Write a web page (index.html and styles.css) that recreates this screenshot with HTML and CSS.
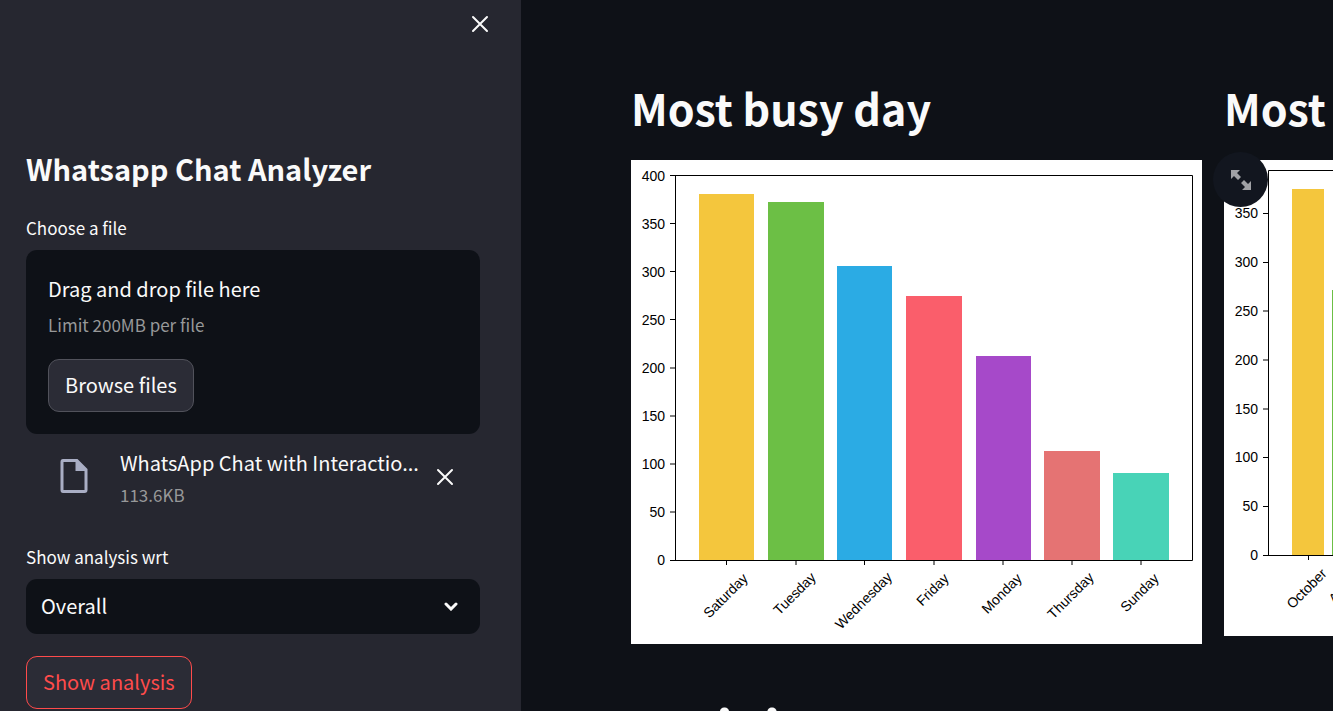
FILE: index.html
```html
<!DOCTYPE html>
<html lang="en">
<head>
<meta charset="utf-8">
<meta name="viewport" content="width=device-width, initial-scale=1">
<title>Whatsapp Chat Analyzer</title>
<link rel="stylesheet" href="styles.css">
</head>
<body>
<div class="app">
  <aside class="sidebar">
    <div class="sidebar-top">
      <button class="icon-button" type="button" aria-label="Close sidebar">
        <svg class="icon-close" viewBox="0 0 18 18" aria-hidden="true"><path d="M2 2 16 16M16 2 2 16"/></svg>
      </button>
    </div>
    <h1 class="sidebar-title">Whatsapp Chat Analyzer</h1>

    <section class="field">
      <label class="field-label" for="browse">Choose a file</label>
      <div class="dropzone">
        <span class="text">Drag and drop file here</span>
        <span class="hint">Limit 200MB per file</span>
        <button class="button" id="browse" type="button">Browse files</button>
      </div>
      <div class="file">
        <svg class="icon-file" viewBox="0 0 28 34" aria-hidden="true">
          <path d="M3 0H17.500L27.500 10V31Q27.500 34 24.500 34H3Q.5 34 .5 31V3Q.5 0 3 0ZM3.500 3V31H24.500V12H15.500V3Z" fill-rule="evenodd"/>
        </svg>
        <div class="file-info">
          <div class="file-name">WhatsApp Chat with Interactio...</div>
          <div class="file-size">113.6KB</div>
        </div>
        <button class="icon-button" type="button" aria-label="Remove file">
          <svg class="icon-close" viewBox="0 0 18 18" aria-hidden="true"><path d="M2 2 16 16M16 2 2 16"/></svg>
        </button>
      </div>
    </section>

    <section class="field">
      <label class="field-label" for="user">Show analysis wrt</label>
      <div class="select-wrap">
        <select class="select" id="user"><option>Overall</option></select>
        <svg class="icon-chevron" viewBox="0 0 14 9" aria-hidden="true"><path d="M2 2 7 7 12 2"/></svg>
      </div>
    </section>
    <button class="button button-active" type="button">Show analysis</button>
  </aside>

  <main class="main">
    <div class="columns">
      <section class="column">
        <h2 class="heading">Most busy day</h2>
        <div class="figure">
          <svg class="chart" viewBox="0 0 571 484" role="img" aria-label="Messages by day">
            <g>
              <rect x="68" y="34" width="55" height="366" fill="#f4c63d"/>
              <rect x="137" y="42" width="56" height="358" fill="#6cbf45"/>
              <rect x="206" y="106" width="55" height="294" fill="#2babe4"/>
              <rect x="275" y="136" width="56" height="264" fill="#fa5e6b"/>
              <rect x="345" y="196" width="55" height="204" fill="#a649c9"/>
              <rect x="413" y="291" width="56" height="109" fill="#e57373"/>
              <rect x="482" y="313" width="56" height="87" fill="#48d3b7"/>
            </g>
            <path class="axis" d="M44.500 15.500H561.500V400.500H44.500ZM39 15.500h6M39 63.500h6M39 111.500h6M39 159.500h6M39 208h6M39 256h6M39 304h6M39 352h6M39 400.500h6M95.500 400v5M165 400v5M233.500 400v5M303 400v5M372 400v5M441 400v5M510 400v5"/>
            <g class="y-labels">
              <text x="34" y="21">400</text><text x="34" y="69">350</text><text x="34" y="117">300</text>
              <text x="34" y="165">250</text><text x="34" y="213">200</text><text x="34" y="261">150</text>
              <text x="34" y="309">100</text><text x="34" y="357">50</text><text x="34" y="405">0</text>
            </g>
            <g class="x-labels">
              <text transform="translate(98 439) rotate(-45)">Saturday</text>
              <text transform="translate(167 437) rotate(-45)">Tuesday</text>
              <text transform="translate(236 444) rotate(-45)">Wednesday</text>
              <text transform="translate(305 433) rotate(-45)">Friday</text>
              <text transform="translate(374 437) rotate(-45)">Monday</text>
              <text transform="translate(443 439) rotate(-45)">Thursday</text>
              <text transform="translate(512 436) rotate(-45)">Sunday</text>
            </g>
          </svg>
        </div>
      </section>

      <section class="column">
        <h2 class="heading">Most busy month</h2>
        <div class="figure">
          <svg class="chart" viewBox="0 0 571 476" role="img" aria-label="Messages by month">
            <rect x="68" y="29" width="32" height="366" fill="#f4c63d"/>
            <rect x="108" y="130" width="32" height="265" fill="#6cbf45"/>
            <path class="axis" d="M44.500 10.500H561.500V395.500H44.500ZM39 53.500h6M39 102.500h6M39 151h6M39 200h6M39 249h6M39 297.500h6M39 346.500h6M39 395.500h6M84.500 395v5M124.500 395v5"/>
            <g class="y-labels">
              <text x="34" y="58">350</text><text x="34" y="107">300</text><text x="34" y="156">250</text>
              <text x="34" y="205">200</text><text x="34" y="254">150</text><text x="34" y="302">100</text>
              <text x="34" y="351">50</text><text x="34" y="400">0</text>
            </g>
            <g class="x-labels">
              <text transform="translate(86 432) rotate(-45)">October</text>
              <text transform="translate(126 429) rotate(-45)">August</text>
            </g>
          </svg>
          <button class="fullscreen" type="button" aria-label="View fullscreen">
            <svg class="icon-expand" viewBox="0 0 20 20" aria-hidden="true"><path d="M0 0H9L6 3 10 7 7 10 3 6 0 9ZM20 20H11L14 17 10 13 13 10 17 14 20 11Z"/></svg>
          </button>
        </div>
      </section>
    </div>
    <h1 class="title">Activity Map</h1>
  </main>
</div>
</body>
</html>
```

FILE: styles.css
```css
* {
  box-sizing: border-box;
}

body {
  margin: 0;
  background: #0e1117;
  color: #fafafa;
  font-family: "Noto Sans CJK SC", "Open Sans", sans-serif;
  font-size: 20px;
  line-height: 32px;
}

h1,
h2 {
  margin: 0;
  font-weight: 700;
}

button,
select {
  font: inherit;
  color: inherit;
}

.app {
  display: flex;
  height: 100vh;
  overflow: hidden;
}

.sidebar {
  flex: 0 0 521px;
  min-width: 0;
  display: flex;
  flex-direction: column;
  align-items: flex-start;
  padding: 8px 41px 0 26px;
  background: #262730;
}

.sidebar-top {
  align-self: stretch;
  display: flex;
  justify-content: flex-end;
  padding-bottom: 108px;
  margin-right: -16px;
}

.icon-button {
  display: flex;
  padding: 7px;
  border: 0;
  background: none;
}

.icon-close {
  width: 18px;
  height: 18px;
  fill: none;
  stroke: #fafafa;
  stroke-width: 2;
  stroke-linecap: round;
}

.sidebar-title {
  font-size: 29px;
  line-height: 40px;
  margin-bottom: 26px;
}

.field {
  align-self: stretch;
  display: flex;
  flex-direction: column;
}

.field-label {
  font-size: 17px;
  line-height: 28px;
  margin-bottom: 8px;
}

.dropzone {
  display: flex;
  flex-direction: column;
  align-items: flex-start;
  padding: 21px 22px 22px;
  border-radius: 11px;
  background: #0e1117;
}

.text {
  line-height: 36px;
}

.hint,
.file-size {
  font-size: 17px;
  color: #979899;
}

.hint {
  line-height: 36px;
  margin-bottom: 16px;
}

.button {
  flex: none;
  height: 53px;
  padding: 0 16px 2px;
  border: 1px solid #51525b;
  border-radius: 11px;
  background: #2b2c36;
}

.button-active {
  margin-top: 22px;
  border-color: #ff4b4b;
  color: #ff4b4b;
}

.file {
  display: flex;
  align-items: flex-start;
  padding: 13px 19px 0 34px;
  margin-bottom: 32px;
}

.icon-file {
  flex: none;
  width: 28px;
  height: 34px;
  margin-top: 12px;
  fill: #a9aec4;
}

.file .icon-button {
  flex: none;
  margin-top: 14px;
}

.file-info {
  flex: 1;
  min-width: 0;
  padding: 0 4px 0 32px;
}

.file-name {
  white-space: nowrap;
}

.select-wrap {
  display: grid;
  align-items: center;
}

.select {
  grid-area: 1 / 1;
  height: 55px;
  padding: 0 15px 2px;
  border: 0;
  border-radius: 11px;
  appearance: none;
  background: #0e1117;
}

.icon-chevron {
  grid-area: 1 / 1;
  justify-self: end;
  width: 14px;
  height: 9px;
  margin-right: 22px;
  fill: none;
  stroke: #fafafa;
  stroke-width: 3;
  stroke-linecap: round;
  pointer-events: none;
}

.main {
  flex: 1;
  min-width: 0;
  overflow: hidden;
  padding: 78px 0 0 110px;
}

.columns {
  display: grid;
  grid-template-columns: repeat(2, 571px);
  gap: 22px;
}

.heading {
  font-size: 43px;
  line-height: 58px;
  margin-bottom: 24px;
  white-space: nowrap;
}

.figure {
  position: relative;
}

.chart {
  display: block;
  width: 100%;
  background: #fff;
  font-family: "Liberation Sans", Arial, sans-serif;
  font-size: 14px;
}

.axis {
  fill: none;
  stroke: #000;
  stroke-width: 1;
}

.y-labels {
  text-anchor: end;
}

.x-labels {
  text-anchor: middle;
}

.fullscreen {
  position: absolute;
  top: -8px;
  left: -11px;
  display: grid;
  place-items: center;
  width: 55px;
  height: 55px;
  padding: 0;
  border: 0;
  border-radius: 50%;
  background: #12161f;
}

.icon-expand {
  width: 20px;
  height: 20px;
  fill: #a0a1a5;
}

.title {
  padding-top: 48px;
  font-size: 54px;
  line-height: 72px;
}
```
